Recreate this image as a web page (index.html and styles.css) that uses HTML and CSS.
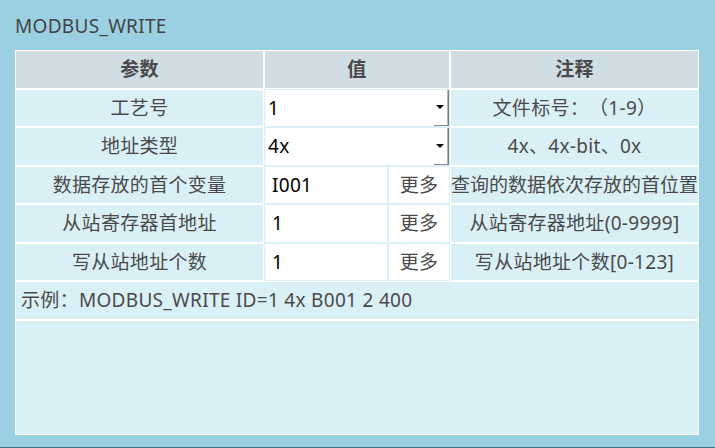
FILE: index.html
```html
<!DOCTYPE html>
<html lang="zh-CN">
<head>
    <meta charset="UTF-8">
    <meta name="viewport" content="width=device-width, initial-scale=1.0">
    <title>MODBUS_WRITE</title>
    <link rel="stylesheet" href="styles.css">
</head>
<body>
    <div class="page">
        <div class="title">MODBUS_WRITE</div>
        <table class="params">
            <colgroup>
                <col class="col-name">
                <col class="col-value">
                <col class="col-more">
                <col class="col-note">
            </colgroup>
            <tr class="head">
                <th>参数</th>
                <th colspan="2">值</th>
                <th>注释</th>
            </tr>
            <tr>
                <td class="name">工艺号</td>
                <td class="value" colspan="2">
                    <div class="select">
                        <span class="select-text">1</span>
                        <span class="select-btn"><i class="arrow"></i></span>
                    </div>
                </td>
                <td class="note">文件标号：（1-9）</td>
            </tr>
            <tr>
                <td class="name">地址类型</td>
                <td class="value" colspan="2">
                    <div class="select">
                        <span class="select-text">4x</span>
                        <span class="select-btn"><i class="arrow"></i></span>
                    </div>
                </td>
                <td class="note">4x、4x-bit、0x</td>
            </tr>
            <tr>
                <td class="name">数据存放的首个变量</td>
                <td class="value"><div class="input">I001</div></td>
                <td class="more">更多</td>
                <td class="note tight">查询的数据依次存放的首位置</td>
            </tr>
            <tr>
                <td class="name">从站寄存器首地址</td>
                <td class="value"><div class="input">1</div></td>
                <td class="more">更多</td>
                <td class="note">从站寄存器地址(0-9999]</td>
            </tr>
            <tr>
                <td class="name">写从站地址个数</td>
                <td class="value"><div class="input">1</div></td>
                <td class="more">更多</td>
                <td class="note">写从站地址个数[0-123]</td>
            </tr>
            <tr>
                <td class="example" colspan="4">示例：MODBUS_WRITE ID=1 4x B001 2 400</td>
            </tr>
            <tr class="blank">
                <td colspan="4"></td>
            </tr>
        </table>
    </div>
</body>
</html>
```

FILE: styles.css
```css
html, body {
    margin: 0;
    padding: 0;
}

body {
    width: 715px;
    height: 448px;
    box-sizing: border-box;
    background-color: #9bd0e2;
    border-bottom: 1px solid #3e6d80;
    font-family: "Noto Sans", "Noto Sans CJK SC", sans-serif;
    font-size: 19px;
    letter-spacing: 0.3px;
    color: #4a4a4a;
    overflow: hidden;
}

.page {
    padding: 0 15px;
}

.title {
    height: 50px;
    box-sizing: border-box;
    padding: 13px 0 0 0;
    line-height: 26px;
    color: #444;
}

.params {
    width: 684px;
    table-layout: fixed;
    border-collapse: separate;
    border-spacing: 0;
}

.col-name { width: 249px; }
.col-value { width: 124px; }
.col-more { width: 62px; }
.col-note { width: 249px; }

.params th,
.params td {
    height: 38.5px;
    box-sizing: border-box;
    padding: 0;
    border: 1px solid #fff;
    background-color: #daf0f7;
    text-align: center;
    vertical-align: middle;
    white-space: nowrap;
    overflow: hidden;
    line-height: 24px;
}

.params th {
    background-color: #d0dde2;
    font-weight: bold;
    color: #4a4a4a;
}

.params td.note {
    text-spacing-trim: space-all;
}

.params td.tight {
    letter-spacing: 0;
    overflow: visible;
}

.params td.value,
.params td.more {
    background-color: #fff;
    border-color: #daf0f7;
}

.params td.value {
    text-align: left;
    color: #000;
}

.input {
    padding-left: 7px;
}

.select {
    display: flex;
    height: 36.5px;
    background-color: #fff;
}

.select-text {
    flex: 1;
    padding-left: 3px;
    display: flex;
    align-items: center;
}

.select-btn {
    width: 14px;
    display: flex;
    align-items: center;
    justify-content: center;
    border-right: 1px solid #7a7a7a;
    border-bottom: 1px solid #8a8a8a;
    box-shadow: inset -1px 0 0 #b4b4b4;
}

.arrow {
    width: 0;
    height: 0;
    border-left: 4px solid transparent;
    border-right: 4px solid transparent;
    border-top: 4px solid #000;
    margin-left: -2px;
}

.params td.more {
    color: #4a4a4a;
}

.params td.example {
    text-align: left;
    padding-left: 5px;
}

.params tr.blank td {
    height: 115.5px;
}
```
